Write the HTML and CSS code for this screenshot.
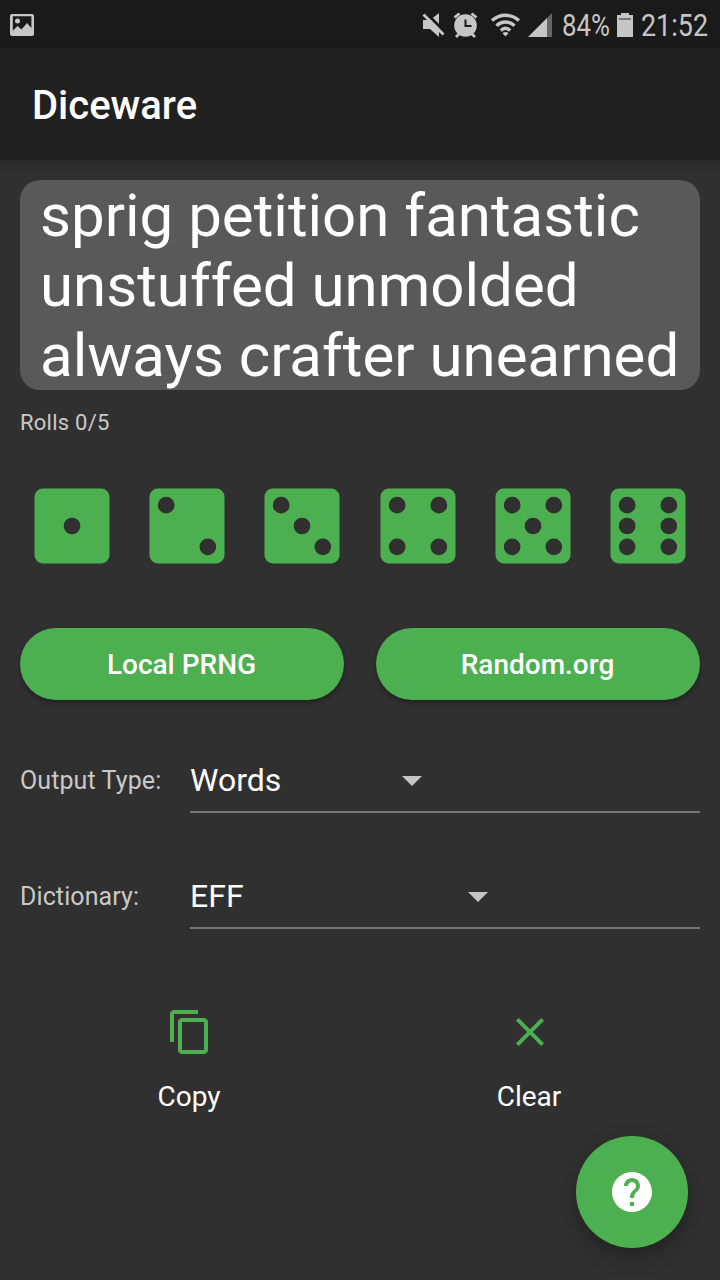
FILE: index.html
```html
<!DOCTYPE html>
<html lang="en">
<head>
<meta charset="utf-8">
<title>Diceware</title>
<link rel="stylesheet" href="styles.css">
</head>
<body>
<div class="app">
  <header class="status">
    <svg class="status-left" width="24" height="24" viewBox="0 0 24 24"><path fill-rule="evenodd" d="M2 1h20a2 2 0 0 1 2 2v18a2 2 0 0 1-2 2H2a2 2 0 0 1-2-2V3a2 2 0 0 1 2-2zm.8 2.200v14.600L7.500 13l4 3.600L17 10l4.400 5V3.200z"/><circle cx="7.500" cy="8" r="2.500"/></svg>
    <svg class="status-right" width="300" height="48" viewBox="420 0 300 48">
      <path d="M423 20h7l9-7v24l-9-8h-7z"/>
      <path class="slash" d="M424 11l22 22"/>
      <path class="line" d="M423.500 14.500l20 20"/>
      <circle cx="465.500" cy="25.500" r="11.300"/>
      <path class="line" d="M454.500 17.500l5-4M476.500 17.500l-5-4M459 34l-3 3M472 34l3 3"/>
      <path class="hand" d="M465.500 19.500v6.500h6"/>
      <g class="wifi"><path d="M492 20.500c8-7 19-7 27 0M496.500 25.700c5.500-5 12.500-5 18 0M500.800 30.500c3-2.800 6.400-2.800 9.400 0"/></g>
      <path d="M505.500 36.500l-3-3.300q3-2.400 6 0z"/>
      <path d="M528 37l19-19v19z"/><path class="dim" d="M547 18l5-5v24h-5z"/>
      <text x="562" y="36" textLength="48" lengthAdjust="spacingAndGlyphs">84%</text>
      <path d="M617 15h4v-2h8v2h4v22h-16z"/><path class="cap" d="M619 19h12"/>
      <text x="641" y="36" textLength="67" lengthAdjust="spacingAndGlyphs">21:52</text>
    </svg>
  </header>
  <div class="bar"><h1>Diceware</h1></div>
  <main>
    <div class="phrase">sprig petition fantastic<br>unstuffed unmolded<br>always crafter unearned</div>
    <div class="rolls">Rolls 0/5</div>
    <div class="dice">
      <svg viewBox="0 0 24 24"><rect x="3" y="3" width="18" height="18" rx="2"/><g class="pips"><circle cx="12" cy="12" r="2"/></g></svg>
      <svg viewBox="0 0 24 24"><rect x="3" y="3" width="18" height="18" rx="2"/><g class="pips"><circle cx="7" cy="7" r="2"/><circle cx="17" cy="17" r="2"/></g></svg>
      <svg viewBox="0 0 24 24"><rect x="3" y="3" width="18" height="18" rx="2"/><g class="pips"><circle cx="7" cy="7" r="2"/><circle cx="12" cy="12" r="2"/><circle cx="17" cy="17" r="2"/></g></svg>
      <svg viewBox="0 0 24 24"><rect x="3" y="3" width="18" height="18" rx="2"/><g class="pips"><circle cx="7" cy="7" r="2"/><circle cx="17" cy="7" r="2"/><circle cx="7" cy="17" r="2"/><circle cx="17" cy="17" r="2"/></g></svg>
      <svg viewBox="0 0 24 24"><rect x="3" y="3" width="18" height="18" rx="2"/><g class="pips"><circle cx="7" cy="7" r="2"/><circle cx="17" cy="7" r="2"/><circle cx="12" cy="12" r="2"/><circle cx="7" cy="17" r="2"/><circle cx="17" cy="17" r="2"/></g></svg>
      <svg viewBox="0 0 24 24"><rect x="3" y="3" width="18" height="18" rx="2"/><g class="pips"><circle cx="7" cy="7" r="2"/><circle cx="17" cy="7" r="2"/><circle cx="7" cy="12" r="2"/><circle cx="17" cy="12" r="2"/><circle cx="7" cy="17" r="2"/><circle cx="17" cy="17" r="2"/></g></svg>
    </div>
    <div class="buttons"><button>Local PRNG</button><button>Random.org</button></div>
    <div class="field">
      <span class="label">Output Type:</span>
      <div class="select"><span class="value value-type">Words</span><svg width="20" height="10" viewBox="0 0 20 10"><path d="M0 0h20L10 10z"/></svg></div>
    </div>
    <div class="field">
      <span class="label">Dictionary:</span>
      <div class="select"><span class="value value-dict">EFF</span><svg width="20" height="10" viewBox="0 0 20 10"><path d="M0 0h20L10 10z"/></svg></div>
    </div>
    <div class="actions">
      <div class="action"><svg width="48" height="48" viewBox="0 0 24 24"><path d="M16 1H4c-1.100 0-2 .9-2 2v14h2V3h12V1zm3 4H8c-1.100 0-2 .9-2 2v14c0 1.100.9 2 2 2h11c1.100 0 2-.9 2-2V7c0-1.100-.9-2-2-2zm0 16H8V7h11v14z"/></svg><span>Copy</span></div>
      <div class="action"><svg width="48" height="48" viewBox="0 0 24 24"><path d="M19 6.410L17.590 5 12 10.590 6.410 5 5 6.410 10.590 12 5 17.590 6.410 19 12 13.410 17.590 19 19 17.590 13.410 12z"/></svg><span>Clear</span></div>
    </div>
  </main>
  <div class="fab"><svg width="48" height="48" viewBox="0 0 24 24"><path d="M12 2C6.480 2 2 6.480 2 12s4.480 10 10 10 10-4.480 10-10S17.520 2 12 2zm1 17h-2v-2h2v2zm2.070-7.750l-.9.920C13.450 12.900 13 13.500 13 15h-2v-.5c0-1.100.45-2.100 1.170-2.830l1.240-1.260c.37-.36.590-.86.590-1.410 0-1.100-.9-2-2-2s-2 .9-2 2H8c0-2.210 1.790-4 4-4s4 1.790 4 4c0 .88-.36 1.680-.93 2.250z"/></svg></div>
</div>
</body>
</html>
```
FILE: styles.css
```css
* { box-sizing: border-box; }
body { margin: 0; background: #303030; color: #fff; font-family: Roboto, sans-serif; }
.app { position: relative; width: 720px; height: 1280px; overflow: hidden; display: flex; flex-direction: column; }
.status { height: 48px; flex: none; background: #1a1a1a; display: flex; align-items: center; justify-content: space-between; padding-left: 10px; fill: #c6c6c6; }
.status-left { margin-top: 2px; }
.status text { font-size: 31px; }
.line { stroke: #c6c6c6; stroke-width: 2.8; fill: none; }
.slash { stroke: #1a1a1a; stroke-width: 3; }
.hand { stroke: #1a1a1a; stroke-width: 2; fill: none; }
.wifi { stroke: #c6c6c6; stroke-width: 3.4; fill: none; }
.dim { fill: #656565; }
.cap { stroke: #777; stroke-width: 2; }
.bar { height: 112px; flex: none; background: #212121; padding: 0 32px; display: flex; align-items: center; box-shadow: 0 2px 8px rgba(0,0,0,.25); }
h1 { margin: 4px 0 0; font-size: 40px; font-weight: 500; line-height: 48px; }
main { padding: 20px 20px 0; }
.phrase { height: 210px; border-radius: 20px; background: #595959; padding: 1px 20px 0; font-size: 60px; line-height: 70px; white-space: nowrap; }
.rolls { margin-top: 19px; font-size: 22px; letter-spacing: .25px; line-height: 28px; color: #c9c9c9; }
.dice { display: flex; justify-content: space-between; margin: 39px 2px 0; }
.dice svg { width: 100px; height: 100px; fill: #4caf50; }
.dice .pips { fill: #303030; }
.buttons { display: flex; gap: 32px; margin-top: 52px; }
button { flex: 1; height: 72px; border: 0; border-radius: 36px; background: #4caf50; color: #fff; font: 500 28px Roboto, sans-serif; padding: 0 1px 0 0; box-shadow: 0 3px 5px rgba(0,0,0,.3); }
.field { display: flex; height: 65px; margin-top: 48px; }
.field + .field { margin-top: 51px; }
.label { width: 170px; font-size: 25px; letter-spacing: .1px; line-height: 65px; color: #c9c9c9; }
.select { flex: 1; display: flex; align-items: flex-start; border-bottom: 2px solid #777; fill: #c6c6c6; }
.select svg { margin-top: 28px; }
.value { font-size: 32px; line-height: 64px; }
.value-type { width: 212px; }
.value-dict { width: 278px; }
.actions { display: flex; margin-top: 79px; }
.action { flex: 1; display: flex; flex-direction: column; align-items: center; fill: #4caf50; }
.action span { margin: 23px 2px 0 0; font-size: 28px; line-height: 36px; }
.fab { position: absolute; right: 32px; bottom: 32px; width: 112px; height: 112px; border-radius: 50%; background: #4caf50; display: grid; place-items: center; fill: #fff; box-shadow: 0 8px 20px rgba(0,0,0,.3); }
```
